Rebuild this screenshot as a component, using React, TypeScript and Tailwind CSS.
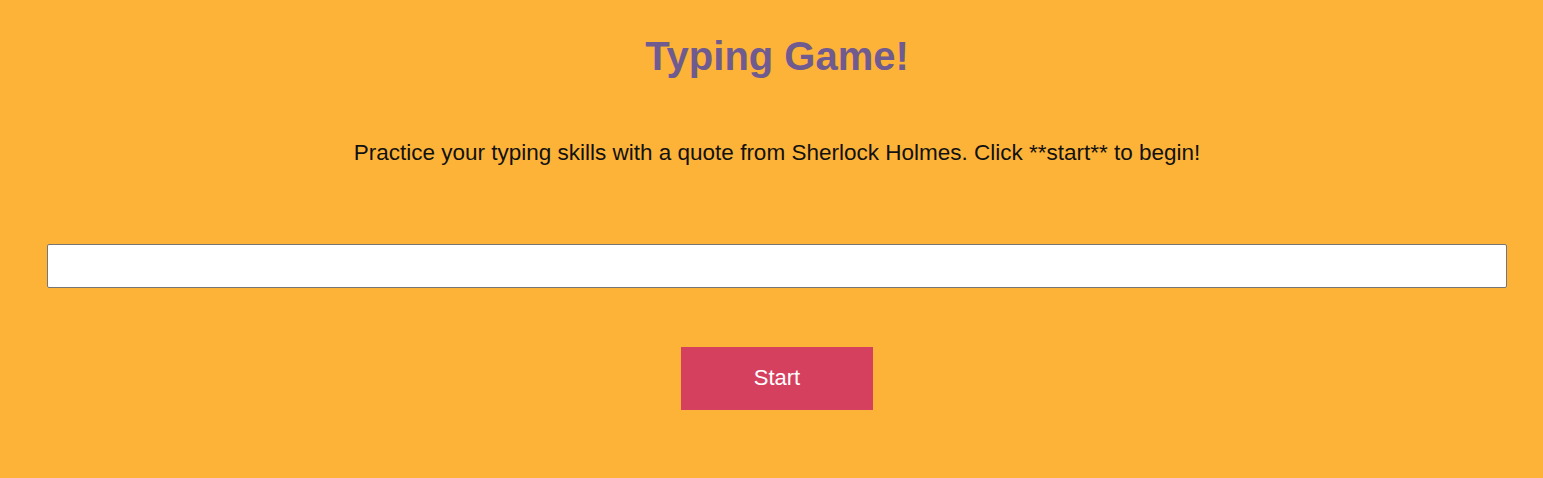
import React from "react";

export default function App() {
  return (
    <div
      className="min-h-[478px] w-full bg-[#fdb338] flex flex-col pl-[47px] pr-[36px] overflow-hidden"
      style={{ fontFamily: '"Liberation Sans", Arial, sans-serif' }}
    >
      <h1 className="mt-[33px] text-center text-[40px] leading-[46px] font-bold text-[#6f5b8f]">
        Typing Game!
      </h1>
      <p className="mt-[60px] text-center text-[22.5px] leading-[27px] text-[#111]">
        Practice your typing skills with a quote from Sherlock Holmes. Click **start** to begin!
      </p>
      <input
        type="text"
        className="mt-[78px] w-full h-[44px] bg-white border border-[#767676] rounded-[2px] outline-none"
      />
      <div className="mt-[59px] flex justify-center">
        <button className="w-[192px] h-[63px] bg-[#d6405f] text-white text-[22px] leading-none pb-[2px]">
          Start
        </button>
      </div>
    </div>
  );
}
